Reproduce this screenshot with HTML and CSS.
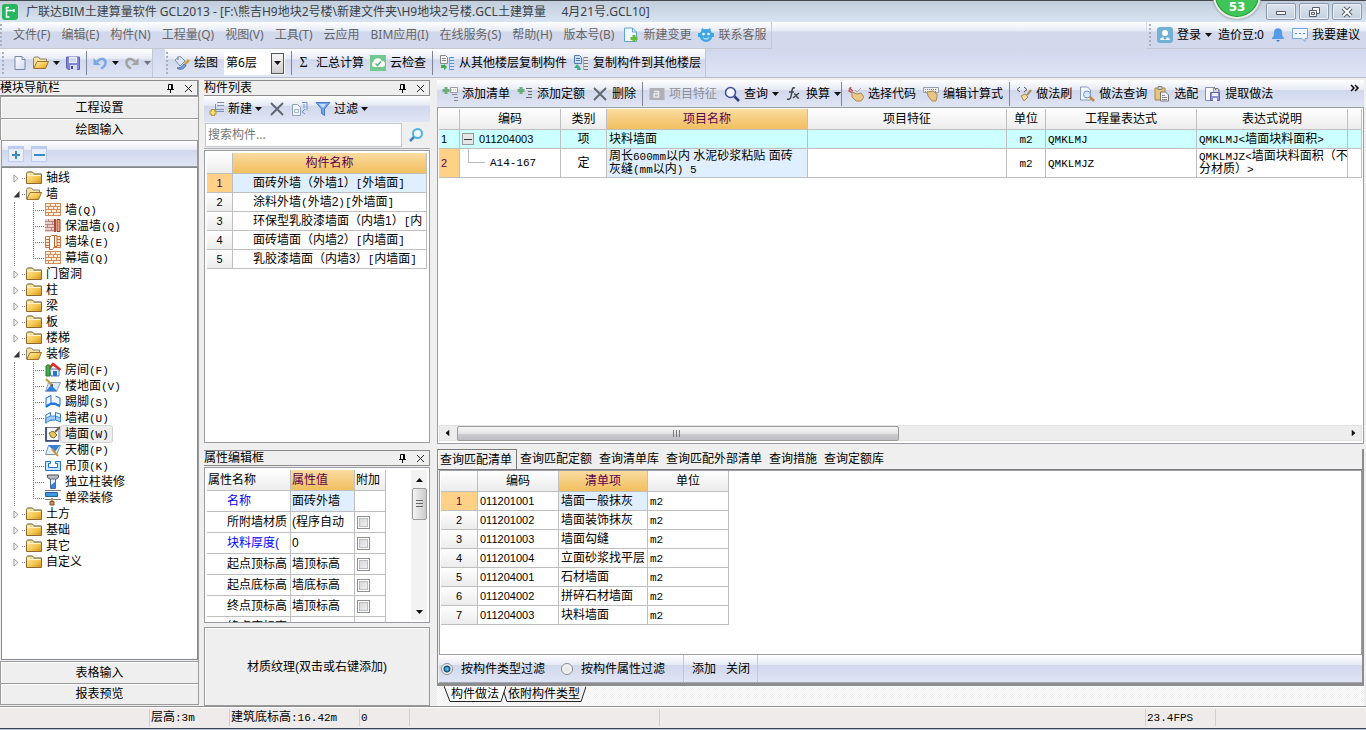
FILE: index.html
```html
<!DOCTYPE html>
<html lang="zh-CN">
<head>
<meta charset="utf-8">
<title>广联达BIM土建算量软件 GCL2013</title>
<link rel="stylesheet" href="styles.css">
</head>
<body>
<svg class="defs" aria-hidden="true">
  <defs>
    <linearGradient id="gold" x1="0" y1="0" x2="1" y2="1"><stop offset="0" stop-color="#fff2a8"/><stop offset=".6" stop-color="#f3c550"/><stop offset="1" stop-color="#d58f1c"/></linearGradient>
    <linearGradient id="page" x1="0" y1="0" x2="1" y2="1"><stop offset="0" stop-color="#fff"/><stop offset="1" stop-color="#cfdbee"/></linearGradient>
    <symbol id="folder" viewBox="0 0 16 16"><path d="M.5 13.500V3.500l1-1.500h5l1.500 2h7.500v9.500z" fill="url(#gold)" stroke="#8d6b30"/><path d="M1.500 5.500h13" stroke="#fff7cf"/><path d="M.5 3.500l1-1.500h5l1.500 2h7.500" fill="none" stroke="#9a958a"/></symbol>
    <symbol id="folder-open" viewBox="0 0 16 16"><path d="M.5 13V3.500l1-1.500h4l1.500 2h6.500V7" fill="#f7e3a0" stroke="#8b8271"/><path d="M.8 13.500L4 6.500h11.500L12.500 13.500z" fill="url(#gold)" stroke="#9b7331"/></symbol>
    <symbol id="brick" viewBox="0 0 16 16"><path d="M1 2h14v12H1z" fill="#fff1df"/><path d="M.5 1.500h15M.5 4.500h15M.5 7.500h15M.5 10.500h15M.5 13.500h15M.5 1v13M15.500 1v13M5.500 1.500v3M10.500 1.500v3M3.500 4.500v3M8.500 4.500v3M12.500 4.500v3M6.500 7.500v3M11.500 7.500v3M3.500 10.500v3M8.500 10.500v3" stroke="#d68a58" fill="none"/></symbol>
    <symbol id="brick-warm" viewBox="0 0 16 16"><path d="M0 1h10v13H0z" fill="#e9cfc9"/><path d="M0 3.500h10M0 6.500h10M0 9.500h10M0 12.500h10M3.500 1v2.500M7.500 3.500v3M2.500 6.500v3M6.500 9.500v3" stroke="#bd8582"/><path d="M9 1h2v13H9z" fill="#a94b36"/><path d="M12 1.500h3v12h-3z" fill="#f2a06e" stroke="#9a3f28"/></symbol>
    <symbol id="brick-pier" viewBox="0 0 16 16"><path d="M.5 2.500h15v11H.5z" fill="#ffe9d2" stroke="#c97845"/><path d="M0 5.500h5M0 8.500h5M0 11.500h5M12 5.500h4M12 8.500h4M12 11.500h4" stroke="#c97845"/><path d="M4.500 3.500l2-2h3v11l-2 3h-3zM9.500 1.500h2.500v11H9.500" fill="#fff" stroke="#bd6233"/></symbol>
    <symbol id="house" viewBox="0 0 16 16"><path d="M4 7h10v7H6z" fill="#e8f1ff" stroke="#4a7cc0"/><path d="M3 8l5-6 7.500 6" fill="none" stroke="#d92c2c" stroke-width="2.500"/><path d="M8 14V9h4v5z" fill="#2f74cf"/><path d="M1 4c2-2 4-1 4 0v10H1z" fill="#46ab48" stroke="#1d7a31"/></symbol>
    <symbol id="floor" viewBox="0 0 16 16"><path d="M3.500 4.500h12l-4 9H.5z" fill="#d9e8fb" stroke="#8ca2bd"/><path d="M1 13l5-6 6 6z" fill="#2c7fdf"/><path d="M1 1l6 6" stroke="#c3993c" stroke-width="2"/><path d="M5 7l3-1v3z" fill="#555"/></symbol>
    <symbol id="skirt" viewBox="0 0 16 16"><path d="M1 13V4l5-2.500v8.500l4-.500 5 2V4l-4.500-2" fill="#eef6ff" stroke="#1f6fd0"/><path d="M1 11l5-2.500 4 0 5 2.500v2.500L10 11H6l-5 3z" fill="#1e78dc"/></symbol>
    <symbol id="dado" viewBox="0 0 16 16"><path d="M.8 13.500V5L5.500 2.500v8l5-1 5 2.500V4L10.500 2.500" fill="#eaf4ff" stroke="#3778b8"/><path d="M1 8l4.500-2 5 0 5 2v4l-5-2h-5L1 13z" fill="#9ed0fa" stroke="#3f8edc"/><path d="M10.500 2.500v7.500" stroke="#3778b8"/></symbol>
    <symbol id="wallface" viewBox="0 0 16 16"><path d="M1 1.500h13v13H1z" fill="#f2f6fd" stroke="#6d7891"/><path d="M1 1v14h13" fill="none" stroke="#273a73" stroke-width="1.500"/><path d="M4 7l4-2 4 4-3 3-3-1z" fill="#e3c75d" stroke="#8d722a"/><path d="M10 6l5-5" stroke="#6a6050" stroke-width="2"/></symbol>
    <symbol id="ceiling" viewBox="0 0 16 16"><path d="M3.500 3.500h12l-4 9H.5z" fill="#e2edf9" stroke="#7d93b2"/><path d="M3 3h12l-5 7z" fill="#347fd8"/><path d="M7 7l6 7" stroke="#c59a3d" stroke-width="2"/></symbol>
    <symbol id="hang" viewBox="0 0 16 16"><path d="M.5 3.500h5v2h-2v4h9v-4h-2v-2h5v9H.5z" fill="#cce7ff" stroke="#1d72d2"/></symbol>
    <symbol id="column" viewBox="0 0 16 16"><path d="M2.500 1h11v2.500l-3 2h-5l-3-2z" fill="#b7bcc4" stroke="#4d5158"/><path d="M5.500 5h5v9.500h-5z" fill="#e6f1ff" stroke="#566b8c"/><path d="M6 14v-3l4-3v6z" fill="#347edc"/></symbol>
    <symbol id="beam" viewBox="0 0 16 16"><path d="M0 .500h16M0 9.500h16" stroke="#777"/><path d="M.5 2.500h12v4H.5z" fill="#3d96e2" stroke="#1f61a4"/><path d="M7 8v3" stroke="#c88d55" stroke-width="2"/><path d="M5 11.500h4V15H5z" fill="#d19a5c" stroke="#75502d"/></symbol>
    <symbol id="new" viewBox="0 0 16 16"><path d="M3 1.500h7l3 3v10H3z" fill="url(#page)" stroke="#7688a8"/><path d="M10 1.500v3h3" fill="#e8f0fa" stroke="#7688a8"/></symbol>
    <symbol id="save" viewBox="0 0 16 16"><path d="M1.500 2h13v12.500H3L1.500 13z" fill="#7f84d6" stroke="#6064b4"/><path d="M4 2h8v6H4z" fill="#eef1fb"/><path d="M5 4h6M5 6h6" stroke="#b4bae0"/><path d="M5 10h7v5H5z" fill="#d8dcf2"/><path d="M6 11h2v3H6z" fill="#45498e"/></symbol>
    <symbol id="undo" viewBox="0 0 16 16"><path d="M5 6.500C9 2 14 4 13.500 8c-.2 3-2.500 4.500-4.500 5.500" fill="none" stroke="#7ba8e4" stroke-width="2.500"/><path d="M1.500 3v7h7z" fill="#7ba8e4"/></symbol>
    <symbol id="brush" viewBox="0 0 16 16"><path d="M1 5l5-4 5 5-5 5z" fill="#dde6f4" stroke="#7d8fae"/><path d="M4 5V1.500" stroke="#677b9e"/><path d="M3 13c4 3 8 0 9-3l-2-1c-2 3-4 4-7 4z" fill="#7ba6e6" stroke="#4a6fb4"/><path d="M11 9l4-4" stroke="#d0a13a" stroke-width="2.500"/></symbol>
    <symbol id="cloud" viewBox="0 0 16 16"><path d="M0 0h16v16H0z" fill="#72c98f"/><path d="M4 12a3 3 0 0 1-.5-5.500A4.500 4.500 0 0 1 12 6a3 3 0 0 1 0 6z" fill="#fff"/><path d="M5.500 8.500l2 2 3.500-4" fill="none" stroke="#55b578" stroke-width="1.500"/></symbol>
    <symbol id="copy-from" viewBox="0 0 16 16"><path d="M1.500.500h5l2 2v6h-7z" fill="#f2f2f2" stroke="#888"/><path d="M3 3.500h4M3 5.500h4" stroke="#888"/><path d="M10 2v13h5V2z" fill="#d6e6fa"/><path d="M10 2.500h5M10 5.500h5M10 8.500h5M10 11.500h5M10 14.500h5" stroke="#4d8bd4"/><path d="M10.500 2v13" stroke="#7fa8dc"/><path d="M2 10v3h3v2.500L8 12 5 9v1" fill="#3caf4a"/></symbol>
    <symbol id="copy-to" viewBox="0 0 16 16"><path d="M1.500.500h5l2 2v6h-7z" fill="#cfe0fb" stroke="#4f76b5"/><path d="M3 3.500h4M3 5.500h4" stroke="#4f76b5"/><path d="M10 2v13h5V2z" fill="#e8e8e8"/><path d="M10 2.500h5M10 5.500h5M10 8.500h5M10 11.500h5M10 14.500h5" stroke="#777"/><path d="M10.500 2v13" stroke="#aaa"/><path d="M8 15H4v-2H1l3-4 3 3" fill="#3caf8a"/></symbol>
    <symbol id="newchange" viewBox="0 0 16 16"><path d="M1.500 1h8l4 4v9.500h-12z" fill="#f2f9ff" stroke="#5fa4d8"/><path d="M9.500 1v4h4" fill="none" stroke="#5fa4d8"/><path d="M11 8v7M7.500 11.500h7" stroke="#67b936" stroke-width="3"/></symbol>
    <symbol id="service" viewBox="0 0 16 16"><circle cx="8" cy="8.500" r="6.500" fill="#3ea6e6"/><path d="M0 6h2v4H0zM14 6h2v4h-2z" fill="#3ea6e6"/><path d="M3 4L4 1l3 2M13 4l-1-3-3 2" fill="#3ea6e6"/><circle cx="5.500" cy="7" r="1.300" fill="#fff"/><circle cx="10.500" cy="7" r="1.300" fill="#fff"/><path d="M5 10.500c2 2 4 2 6 0" stroke="#fff" fill="none"/></symbol>
    <symbol id="user" viewBox="0 0 16 16"><rect width="16" height="16" rx="3" fill="#73b0d5"/><circle cx="8" cy="6" r="3" fill="#fff"/><path d="M3 13c0-4 10-4 10 0z" fill="#fff"/><path d="M8 9l2 2-2 2-2-2z" fill="#73b0d5"/></symbol>
    <symbol id="bell" viewBox="0 0 16 16"><path d="M2 11c2-2 2-3 2-6 0-5 8-5 8 0 0 3 0 4 2 6v1H2z" fill="#559be9"/><path d="M6 13h4l-2 2z" fill="#3b7fd0"/></symbol>
    <symbol id="chat" viewBox="0 0 16 16"><path d="M.5 1.500h15v10H13v3l-3-3H.5z" fill="#f0f6ff" stroke="#74a6e4"/><path d="M3 6.500h2M7 6.500h2M11 6.500h2" stroke="#5b85bf"/></symbol>
    <symbol id="add-list" viewBox="0 0 16 16"><path d="M4 1v7M.5 4.500h7" stroke="#6aae78" stroke-width="3"/><path d="M8.500 1.500h7v5h-7z" fill="#fff" stroke="#99a"/><path d="M9 4h6" stroke="#9aa" stroke-dasharray="1 1"/><path d="M10 8.500h5M12 11.500h4M12 14.500h4" stroke="#888"/></symbol>
    <symbol id="add-quota" viewBox="0 0 16 16"><path d="M4 1v7M.5 4.500h7" stroke="#6aae78" stroke-width="3"/><path d="M9 2.500h6M11 5.500h4M11 8.500h4M9 11.500h6" stroke="#666"/></symbol>
    <symbol id="cross" viewBox="0 0 16 16"><path d="M2 2l12 12M14 2L2 14" stroke="#60656c" stroke-width="1.800"/></symbol>
    <symbol id="feature" viewBox="0 0 16 16"><path d="M.5 2h15v12H.5z" fill="#aeb0b5"/><path d="M5 5.500h4.500V11H5V8h4" fill="none" stroke="#e6e8ec" stroke-width="1.500"/></symbol>
    <symbol id="lens" viewBox="0 0 16 16"><circle cx="6.500" cy="6.500" r="5" fill="#f2f6ff" stroke="#41499a" stroke-width="1.500"/><path d="M10.500 10.500l4.500 4.500" stroke="#34397c" stroke-width="2.500"/></symbol>
    <symbol id="lens-blue" viewBox="0 0 16 16"><circle cx="9.500" cy="6.500" r="4.500" fill="#eef8ff" stroke="#50b0e8" stroke-width="2"/><path d="M6 10l-4 4" stroke="#4384c4" stroke-width="2.500"/></symbol>
    <symbol id="fx" viewBox="0 0 16 16"><path d="M9 2C6 1 6 4 5.500 8S4 14 1 13M3 6h5M8 8c3-1 2 5 5 4M13 7l-6 5" fill="none" stroke="#444" stroke-width="1.500"/></symbol>
    <symbol id="hand" viewBox="0 0 16 16"><path d="M1 2l4 3M3 1L1 5l4 2" stroke="#c65454" stroke-width="1.500" fill="none"/><path d="M4 6l5 2 4-1 3 4-3 4H8l-4-4z" fill="#e9c98a" stroke="#b08a4d"/><path d="M7 4l2 2 4-4" stroke="#aaa" fill="none"/></symbol>
    <symbol id="formula" viewBox="0 0 16 16"><path d="M.5 1.500h15v5H.5z" fill="#eee" stroke="#9b9fa9"/><path d="M2 3.500h12M2 5.500h12" stroke="#888" stroke-dasharray="1 1"/><path d="M4 6l6-1 4 3v3l-1 4H9L5 10z" fill="#e5c58a" stroke="#b08a4d"/></symbol>
    <symbol id="method" viewBox="0 0 16 16"><path d="M4 1L1 3.500 4 6M8 1l3 2.500L8 6" fill="none" stroke="#555"/><path d="M5 10l4-2 3 3-4 4z" fill="#efd99a" stroke="#ac8c4b"/><path d="M11 9l4-5" stroke="#a68340" stroke-width="2"/></symbol>
    <symbol id="method-find" viewBox="0 0 16 16"><path d="M1.500 1h7l3 3v10h-10z" fill="#f7faff" stroke="#8599bb"/><circle cx="8" cy="8.500" r="3.500" fill="#d6ebff" stroke="#6c93c8"/><path d="M11 11l4 4" stroke="#c98a35" stroke-width="2.500"/></symbol>
    <symbol id="paste" viewBox="0 0 16 16"><path d="M1 2h10v12H1z" fill="#e7c67a" stroke="#a88747"/><path d="M4 .500h4v3H4z" fill="#ccc" stroke="#888"/><path d="M6.500 6h5l3 3v6h-8z" fill="#f4f4f4" stroke="#777"/><path d="M8 9.500h3M8 11.500h5M8 13.500h5" stroke="#888"/></symbol>
    <symbol id="extract" viewBox="0 0 16 16"><path d="M.5 1.500h8v13h-8z" fill="#f6f8fc" stroke="#8591aa"/><path d="M5.500 6.500h9v8h-9z" fill="#8a92d6" stroke="#5e65ac"/><path d="M7 7h6v3H7zM8 12h4v3H8z" fill="#eef"/><path d="M9 1l2 3M14 6c0-4-1-4-4-3" fill="none" stroke="#555"/></symbol>
    <symbol id="new-item" viewBox="0 0 16 16"><path d="M8 1.500h7M8 4.500h7M6.500 3v9M7 10.500h8M7 8.500h8" stroke="#7890b5" fill="none"/><path d="M4 8v7M.5 11.500h7" stroke="#b39a3e" stroke-width="4"/><path d="M4 9v5M1.500 11.500h5" stroke="#f9e377" stroke-width="2"/></symbol>
    <symbol id="copy-item" viewBox="0 0 16 16"><path d="M.5 3.500h5l3 3v8h-8z" fill="#f2f5fb" stroke="#8da0c2"/><path d="M2.500 8.500h4v3h-4z" fill="none" stroke="#a6b5d0"/><path d="M10 1.500h5v8M13 8l-3 3 3 2M12 3v4" fill="none" stroke="#6f92cc"/></symbol>
    <symbol id="funnel" viewBox="0 0 16 16"><path d="M1 1.500h14L9.500 8v6.500l-3-2V8z" fill="#73a6ee" stroke="#4a7acb"/><path d="M4 3h7L8 7" fill="#c5dfff"/></symbol>
    <symbol id="plus" viewBox="0 0 16 16"><path d="M.5.500h15v15H.5z" fill="#e9eefa" stroke="#bccdf0"/><path d="M0 1.500h16" stroke="#bccdf0" stroke-width="3"/><path d="M8 5v8M4 9h8" stroke="#3c8bc8" stroke-width="2"/></symbol>
    <symbol id="minus" viewBox="0 0 16 16"><path d="M.5.500h15v15H.5z" fill="#e9eefa" stroke="#bccdf0"/><path d="M0 1.500h16" stroke="#bccdf0" stroke-width="3"/><path d="M3 9h11" stroke="#3c8bc8" stroke-width="2"/></symbol>
    <symbol id="pin" viewBox="0 0 9 9"><path d="M2.500 5V.500h4V5M1 5.500h7M4.500 6v3M5.500 1v4" fill="none" stroke="#000"/></symbol>
    <symbol id="close" viewBox="0 0 9 9"><path d="M1 1l7 7M8 1L1 8" stroke="#222"/></symbol>
    <symbol id="caret" viewBox="0 0 7 4"><path d="M0 0h7L3.500 4z" fill="#111"/></symbol>
    <symbol id="closed" viewBox="0 0 7 9"><path d="M1 1v7l4-3.500z" fill="#fff" stroke="#999"/></symbol>
    <symbol id="opened" viewBox="0 0 7 9"><path d="M6.500 1v6.500H.5z" fill="#333"/></symbol>
  </defs>
</svg>
<div class="app">
  <header class="titlebar">
    <svg class="logo" viewBox="0 0 16 16"><rect width="16" height="16" rx="3" fill="#25b65e"/><path d="M4.500 3v10h3M4.500 6.500H12M12 5v3M4.500 3.500H7" fill="none" stroke="#fff" stroke-width="1.500"/></svg>
    <h1>广联达BIM土建算量软件 GCL2013 - [F:\熊吉H9地块2号楼\新建文件夹\H9地块2号楼.GCL土建算量&nbsp;&nbsp;&nbsp; &nbsp;4月21号.GCL10]</h1>
    <div class="badge">53</div>
    <div class="winbtns">
      <button type="button" aria-label="最小化"><svg viewBox="0 0 12 12"><path d="M1.500 5.500h9v3h-9z" fill="#fff" stroke="#555c69"/></svg></button>
      <button type="button" aria-label="还原"><svg viewBox="0 0 12 12"><path d="M4.500 1.500h7v6h-7z" fill="#fff" stroke="#555c69"/><path d="M1.500 4.500h7v6h-7z" fill="#fff" stroke="#555c69"/><path d="M3.500 6.500h3v2h-3z" fill="none" stroke="#555c69"/></svg></button>
      <button type="button" aria-label="关闭"><svg viewBox="0 0 12 12"><path d="M2 2l8 8M10 2l-8 8" stroke="#555c69" stroke-width="4"/><path d="M2 2l8 8M10 2l-8 8" stroke="#fff" stroke-width="2"/></svg></button>
    </div>
  </header>

  <div class="bars">
    <div class="menurow">
      <nav class="menu">
        <span class="grip"></span>
        <button type="button">文件(F)</button><button type="button">编辑(E)</button><button type="button">构件(N)</button><button type="button">工程量(Q)</button><button type="button">视图(V)</button><button type="button">工具(T)</button><button type="button">云应用</button><button type="button">BIM应用(I)</button><button type="button">在线服务(S)</button><button type="button">帮助(H)</button><button type="button">版本号(B)</button>
        <div class="menulinks">
          <button type="button"><svg class="i"><use href="#newchange"/></svg>新建变更</button>
          <button type="button"><svg class="i"><use href="#service"/></svg>联系客服</button>
        </div>
      </nav>
      <div class="account">
        <span class="grip"></span>
        <button type="button"><svg class="i"><use href="#user"/></svg>登录<svg class="caret"><use href="#caret"/></svg></button>
        <span>造价豆:0</span>
        <button type="button" aria-label="通知"><svg class="i"><use href="#bell"/></svg></button>
        <button type="button"><svg class="i"><use href="#chat"/></svg>我要建议</button>
      </div>
    </div>
    <div class="toolrow">
      <div class="strip files">
        <span class="grip"></span>
        <button type="button" aria-label="新建"><svg class="i"><use href="#new"/></svg></button>
        <button type="button" aria-label="打开"><svg class="i"><use href="#folder-open"/></svg><svg class="caret"><use href="#caret"/></svg></button>
        <button type="button" aria-label="保存"><svg class="i"><use href="#save"/></svg></button>
        <span class="sep"></span>
        <button type="button" aria-label="撤销"><svg class="i"><use href="#undo"/></svg><svg class="caret"><use href="#caret"/></svg></button>
        <button type="button" aria-label="重做" disabled><svg class="i redo"><use href="#undo"/></svg><svg class="caret"><use href="#caret"/></svg></button>
      </div>
      <div class="strip draw">
        <span class="grip"></span>
        <button type="button"><svg class="i"><use href="#brush"/></svg>绘图</button>
        <div class="combo"><select aria-label="楼层"><option>第6层</option></select><span class="drop"><svg class="caret"><use href="#caret"/></svg></span></div>
        <span class="sep"></span>
        <button type="button" class="sum"><span class="sigma">Σ</span>汇总计算</button>
        <button type="button"><svg class="i"><use href="#cloud"/></svg>云检查</button>
        <span class="sep"></span>
        <button type="button"><svg class="i"><use href="#copy-from"/></svg>从其他楼层复制构件</button>
        <button type="button"><svg class="i"><use href="#copy-to"/></svg>复制构件到其他楼层</button>
      </div>
    </div>
  </div>

  <main class="work">
    <aside class="nav">
      <div class="cap"><h2>模块导航栏</h2><svg class="g"><use href="#pin"/></svg><svg class="g"><use href="#close"/></svg></div>
      <button type="button" class="section">工程设置</button>
      <button type="button" class="section">绘图输入</button>
      <div class="treebar">
        <button type="button" aria-label="展开"><svg class="i"><use href="#plus"/></svg></button>
        <button type="button" aria-label="折叠"><svg class="i"><use href="#minus"/></svg></button>
      </div>
      <ul class="tree">
        <li><div class="node"><svg class="tw"><use href="#closed"/></svg><i></i><svg class="i"><use href="#folder"/></svg>轴线</div></li>
        <li><div class="node"><svg class="tw"><use href="#opened"/></svg><i></i><svg class="i"><use href="#folder-open"/></svg>墙</div>
          <ul>
            <li><i></i><svg class="i"><use href="#brick"/></svg><span>墙<b>(Q)</b></span></li>
            <li><i></i><svg class="i"><use href="#brick-warm"/></svg><span>保温墙<b>(Q)</b></span></li>
            <li><i></i><svg class="i"><use href="#brick-pier"/></svg><span>墙垛<b>(E)</b></span></li>
            <li><i></i><svg class="i"><use href="#brick"/></svg><span>幕墙<b>(Q)</b></span></li>
          </ul></li>
        <li><div class="node"><svg class="tw"><use href="#closed"/></svg><i></i><svg class="i"><use href="#folder"/></svg>门窗洞</div></li>
        <li><div class="node"><svg class="tw"><use href="#closed"/></svg><i></i><svg class="i"><use href="#folder"/></svg>柱</div></li>
        <li><div class="node"><svg class="tw"><use href="#closed"/></svg><i></i><svg class="i"><use href="#folder"/></svg>梁</div></li>
        <li><div class="node"><svg class="tw"><use href="#closed"/></svg><i></i><svg class="i"><use href="#folder"/></svg>板</div></li>
        <li><div class="node"><svg class="tw"><use href="#closed"/></svg><i></i><svg class="i"><use href="#folder"/></svg>楼梯</div></li>
        <li><div class="node"><svg class="tw"><use href="#opened"/></svg><i></i><svg class="i"><use href="#folder-open"/></svg>装修</div>
          <ul>
            <li><i></i><svg class="i"><use href="#house"/></svg><span>房间<b>(F)</b></span></li>
            <li><i></i><svg class="i"><use href="#floor"/></svg><span>楼地面<b>(V)</b></span></li>
            <li><i></i><svg class="i"><use href="#skirt"/></svg><span>踢脚<b>(S)</b></span></li>
            <li><i></i><svg class="i"><use href="#dado"/></svg><span>墙裙<b>(U)</b></span></li>
            <li><i></i><svg class="i"><use href="#wallface"/></svg><span class="current">墙面<b>(W)</b></span></li>
            <li><i></i><svg class="i"><use href="#ceiling"/></svg><span>天棚<b>(P)</b></span></li>
            <li><i></i><svg class="i"><use href="#hang"/></svg><span>吊顶<b>(K)</b></span></li>
            <li><i></i><svg class="i"><use href="#column"/></svg><span>独立柱装修</span></li>
            <li><i></i><svg class="i"><use href="#beam"/></svg><span>单梁装修</span></li>
          </ul></li>
        <li><div class="node"><svg class="tw"><use href="#closed"/></svg><i></i><svg class="i"><use href="#folder"/></svg>土方</div></li>
        <li><div class="node"><svg class="tw"><use href="#closed"/></svg><i></i><svg class="i"><use href="#folder"/></svg>基础</div></li>
        <li><div class="node"><svg class="tw"><use href="#closed"/></svg><i></i><svg class="i"><use href="#folder"/></svg>其它</div></li>
        <li><div class="node"><svg class="tw"><use href="#closed"/></svg><i></i><svg class="i"><use href="#folder"/></svg>自定义</div></li>
      </ul>
      <button type="button" class="section">表格输入</button>
      <button type="button" class="section">报表预览</button>
    </aside>

    <section class="parts">
      <div class="cap"><h2>构件列表</h2><svg class="g"><use href="#pin"/></svg><svg class="g"><use href="#close"/></svg></div>
      <div class="tools">
        <button type="button"><svg class="i"><use href="#new-item"/></svg>新建<svg class="caret"><use href="#caret"/></svg></button>
        <button type="button" aria-label="删除"><svg class="i"><use href="#cross"/></svg></button>
        <button type="button" aria-label="复制"><svg class="i"><use href="#copy-item"/></svg></button>
        <button type="button"><svg class="i"><use href="#funnel"/></svg>过滤<svg class="caret"><use href="#caret"/></svg></button>
      </div>
      <div class="search"><input type="text" aria-label="搜索构件" placeholder="搜索构件..."><button type="button" aria-label="搜索"><svg class="i"><use href="#lens-blue"/></svg></button></div>
      <div class="sheet list">
        <table class="grid">
          <colgroup><col class="w26"><col></colgroup>
          <thead><tr><th></th><th class="hot">构件名称</th></tr></thead>
          <tbody>
            <tr><th class="on">1</th><td class="sel">面砖外墙（外墙1）<b>[</b>外墙面<b>]</b></td></tr>
            <tr><th>2</th><td>涂料外墙<b>(</b>外墙2<b>)[</b>外墙面<b>]</b></td></tr>
            <tr><th>3</th><td>环保型乳胶漆墙面（内墙1）<b>[</b>内</td></tr>
            <tr><th>4</th><td>面砖墙面（内墙2）<b>[</b>内墙面<b>]</b></td></tr>
            <tr><th>5</th><td>乳胶漆墙面（内墙3）<b>[</b>内墙面<b>]</b></td></tr>
          </tbody>
        </table>
      </div>
      <div class="cap second"><h2>属性编辑框</h2><svg class="g"><use href="#pin"/></svg><svg class="g"><use href="#close"/></svg></div>
      <div class="sheet props">
        <table class="grid">
          <colgroup><col class="w84"><col class="w64"><col class="w31"></colgroup>
          <thead><tr><th>属性名称</th><th class="hot">属性值</th><th>附加</th></tr></thead>
          <tbody>
            <tr><td class="blue">名称</td><td class="sel">面砖外墙</td><td></td></tr>
            <tr><td>所附墙材质</td><td>(程序自动</td><td><input type="checkbox" aria-label="附加 所附墙材质"></td></tr>
            <tr><td class="blue">块料厚度(</td><td>0</td><td><input type="checkbox" aria-label="附加 块料厚度"></td></tr>
            <tr><td>起点顶标高</td><td>墙顶标高</td><td><input type="checkbox" aria-label="附加 起点顶标高"></td></tr>
            <tr><td>起点底标高</td><td>墙底标高</td><td><input type="checkbox" aria-label="附加 起点底标高"></td></tr>
            <tr><td>终点顶标高</td><td>墙顶标高</td><td><input type="checkbox" aria-label="附加 终点顶标高"></td></tr>
            <tr><td>终点底标高</td><td></td><td></td></tr>
          </tbody>
        </table>
        <div class="vscroll"><svg class="caret up"><use href="#caret"/></svg><span class="thumb"></span><svg class="caret end"><use href="#caret"/></svg></div>
      </div>
      <button type="button" class="texture">材质纹理(双击或右键添加)</button>
    </section>

    <section class="detail">
      <div class="tools main">
        <button type="button"><svg class="i"><use href="#add-list"/></svg>添加清单</button>
        <button type="button"><svg class="i"><use href="#add-quota"/></svg>添加定额</button>
        <button type="button"><svg class="i"><use href="#cross"/></svg>删除</button>
        <span class="sep"></span>
        <button type="button" disabled><svg class="i"><use href="#feature"/></svg>项目特征</button>
        <button type="button"><svg class="i"><use href="#lens"/></svg>查询<svg class="caret"><use href="#caret"/></svg></button>
        <button type="button"><svg class="i"><use href="#fx"/></svg>换算<svg class="caret"><use href="#caret"/></svg></button>
        <span class="sep near"></span>
        <button type="button"><svg class="i"><use href="#hand"/></svg>选择代码</button>
        <button type="button"><svg class="i"><use href="#formula"/></svg>编辑计算式</button>
        <span class="sep"></span>
        <button type="button"><svg class="i"><use href="#method"/></svg>做法刷</button>
        <button type="button"><svg class="i"><use href="#method-find"/></svg>做法查询</button>
        <button type="button"><svg class="i"><use href="#paste"/></svg>选配</button>
        <button type="button"><svg class="i"><use href="#extract"/></svg>提取做法</button>
        <button type="button" class="more" aria-label="更多"><svg viewBox="0 0 10 8"><path d="M1 1l3 3-3 3M5 1l3 3-3 3" fill="none" stroke="#000" stroke-width="1.500"/></svg></button>
      </div>
      <div class="sheet bill">
        <table class="grid">
          <colgroup><col class="w21"><col class="w101"><col class="w46"><col class="w201"><col class="w199"><col class="w39"><col class="w151"><col class="w151"><col></colgroup>
          <thead><tr><th></th><th>编码</th><th>类别</th><th class="hot">项目名称</th><th>项目特征</th><th>单位</th><th>工程量表达式</th><th>表达式说明</th><th></th></tr></thead>
          <tbody>
            <tr class="cyan"><td class="num">1</td><td><div class="code"><span class="box"></span>011204003</div></td><td class="c">项</td><td>块料墙面</td><td></td><td class="c"><b>m2</b></td><td><b>QMKLMJ</b></td><td><b>QMKLMJ&lt;</b>墙面块料面积<b>&gt;</b></td><td></td></tr>
            <tr class="tall"><td class="num on">2</td><td><div class="code"><span class="elbow"></span><b>A14-167</b></div></td><td class="c">定</td><td class="sel">周长<b>600mm</b>以内 水泥砂浆粘贴 面砖<br>灰缝<b>(mm</b>以内<b>) 5</b></td><td></td><td class="c"><b>m2</b></td><td><b>QMKLMJZ</b></td><td><b>QMKLMJZ&lt;</b>墙面块料面积（不<br>分材质）<b>&gt;</b></td><td></td></tr>
          </tbody>
        </table>
        <div class="hscroll"><svg class="caret left"><use href="#caret"/></svg><span class="thumb"></span><svg class="caret right"><use href="#caret"/></svg></div>
      </div>
      <div class="query">
        <div class="tabs" role="tablist">
          <button type="button" role="tab" class="active" aria-selected="true">查询匹配清单</button><button type="button" role="tab">查询匹配定额</button><button type="button" role="tab">查询清单库</button><button type="button" role="tab">查询匹配外部清单</button><button type="button" role="tab">查询措施</button><button type="button" role="tab">查询定额库</button>
        </div>
        <div class="results">
          <table class="grid">
            <colgroup><col class="w37"><col class="w81"><col class="w89"><col class="w81"></colgroup>
            <thead><tr><th></th><th>编码</th><th class="hot">清单项</th><th>单位</th></tr></thead>
            <tbody>
              <tr><th class="on">1</th><td class="id">011201001</td><td class="sel">墙面一般抹灰</td><td><b>m2</b></td></tr>
              <tr><th>2</th><td class="id">011201002</td><td>墙面装饰抹灰</td><td><b>m2</b></td></tr>
              <tr><th>3</th><td class="id">011201003</td><td>墙面勾缝</td><td><b>m2</b></td></tr>
              <tr><th>4</th><td class="id">011201004</td><td>立面砂浆找平层</td><td><b>m2</b></td></tr>
              <tr><th>5</th><td class="id">011204001</td><td>石材墙面</td><td><b>m2</b></td></tr>
              <tr><th>6</th><td class="id">011204002</td><td>拼碎石材墙面</td><td><b>m2</b></td></tr>
              <tr><th>7</th><td class="id">011204003</td><td>块料墙面</td><td><b>m2</b></td></tr>
            </tbody>
          </table>
        </div>
        <div class="filter">
          <div class="radios">
            <label><input type="radio" name="f" checked>按构件类型过滤</label>
            <label><input type="radio" name="f">按构件属性过滤</label>
          </div>
          <div class="acts"><button type="button">添加</button><button type="button">关闭</button></div>
        </div>
      </div>
      <div class="sheets">
        <button type="button" class="st front"><svg viewBox="0 0 62 17" preserveAspectRatio="none"><path d="M0 0l6 15.500h51L62 0" fill="#fff" stroke="#222"/></svg><span>构件做法</span></button>
        <button type="button" class="st"><svg viewBox="0 0 86 17" preserveAspectRatio="none"><path d="M0 .500l5 15h76L86 .500" fill="#f0f0f0" stroke="#222"/></svg><span>依附构件类型</span></button>
      </div>
    </section>
  </main>

  <footer class="status">
    <span class="s149"></span><span class="s80">层高<b>:3m</b></span><span class="s130">建筑底标高<b>:16.42m</b></span><span class="s50"><b>0</b></span><span class="s250"></span><span class="fill"></span><span class="s70"><b>23.4FPS</b></span><span class="s150"></span>
  </footer>
  <div class="edge"></div>
</div>
</body>
</html>
```

FILE: styles.css
```css
* { box-sizing: border-box; }
body { margin: 0; }
.defs { position: absolute; width: 0; height: 0; }

.app {
  display: flex;
  flex-direction: column;
  height: 100vh;
  overflow: hidden;
  background: #efefef;
  color: #000;
  font: 12px/16px "Liberation Sans", "Noto Sans CJK SC", sans-serif;
  white-space: nowrap;
}
button {
  display: inline-flex;
  align-items: center;
  gap: 4px;
  margin: 0;
  padding: 0;
  border: 0;
  background: none;
  color: inherit;
  font: inherit;
  white-space: nowrap;
}
svg { flex: none; }
.i { width: 16px; height: 16px; }
.caret { width: 7px; height: 4px; }
b { font: 11px/12px "Liberation Mono", monospace; }
.grip {
  flex: none;
  width: 2px;
  height: 22px;
  background: repeating-linear-gradient(#a9afbf 0 2px, transparent 2px 4px);
}
.sep { flex: none; width: 1px; height: 24px; background: #7d8498; }

/* title bar */
.titlebar {
  position: relative;
  flex: none;
  display: flex;
  align-items: center;
  height: 22px;
  padding: 0 4px 0 2px;
  border-top: 1px solid #44474d;
  background: linear-gradient(#c2cddb, #d7e4f1);
}
.logo { width: 16px; height: 16px; }
.titlebar h1 {
  flex: 1;
  margin: 0 0 0 8px;
  color: #3b4148;
  font: 12px/20px "Noto Sans", "Noto Sans CJK SC", sans-serif;
}
.badge {
  position: absolute;
  top: -30px;
  right: 105px;
  z-index: 2;
  display: flex;
  align-items: flex-end;
  justify-content: center;
  width: 48px;
  height: 48px;
  padding-bottom: 3px;
  border: 2px solid #e9eee9;
  border-radius: 50%;
  background: #3fc458;
  box-shadow: 0 0 3px #777, inset 0 0 0 1px #22963c;
  color: #fff;
  font: bold 12px/14px "DejaVu Sans", sans-serif;
}
.winbtns { display: flex; gap: 3px; }
.winbtns button {
  justify-content: center;
  width: 30px;
  height: 17px;
  border: 1px solid #8d99a8;
  border-radius: 2px;
  background: linear-gradient(#dbe4ee, #c5d1df);
  box-shadow: inset 0 0 0 1px #e8eef5;
}
.winbtns svg { width: 12px; height: 12px; }

/* menu and toolbars */
.bars {
  flex: none;
  background: linear-gradient(#fff 0, #e6eaf5 9px, #d2d8ec 10px, #d3d9ed 30px, #e0e4f5 100%);
  border-bottom: 1px solid #b7bccb;
  font-family: "Noto Sans", "Noto Sans CJK SC", sans-serif;
}
.menurow { display: flex; justify-content: space-between; height: 27px; }
.menu {
  display: flex;
  align-items: center;
  gap: 11px;
  padding: 0 5px 0 0;
  border-right: 1px solid #c5c8d0;
  border-bottom: 1px solid #c5c8d0;
  color: #666;
}
.menulinks { display: flex; gap: 7px; margin-left: -2px; }
.account {
  display: flex;
  align-items: center;
  gap: 6px;
  padding: 0 6px 0 2px;
  border-left: 1px solid #d7dbe6;
  border-bottom: 1px solid #c5c8d0;
}
.toolrow { display: flex; gap: 12px; height: 28px; }
.strip, .tools, .treebar, .filter {
  display: flex;
  align-items: center;
  background: linear-gradient(#fff 0, #e6eaf5 36%, #d1d8ec 38%, #e0e5f5 100%);
}
.strip { gap: 6px; padding-right: 4px; border-right: 1px solid #c2c7d4; }
.files { gap: 5px; padding: 0 1px 0 2px; }
.files .grip { margin-right: 3px; }
.draw { padding-left: 1px; }
.redo { transform: scaleX(-1); filter: grayscale(1); }
button:disabled { color: #8b8f98; }
button:disabled .caret { opacity: .5; }
.combo { position: relative; width: 61px; height: 23px; }
.combo select {
  width: 100%;
  height: 100%;
  padding: 0 2px;
  border: 0;
  border-radius: 0;
  appearance: none;
  background: #fff;
  color: #000;
  font: inherit;
}
.drop {
  position: absolute;
  inset: 1px 1px 1px auto;
  display: flex;
  align-items: center;
  justify-content: center;
  width: 13px;
  border: 1px solid #555;
  background: linear-gradient(#f6f6f6, #cfcfcf);
  pointer-events: none;
}
.sum { gap: 7px; }
.sigma { width: 11px; font: 14px/16px "Liberation Serif", serif; }

/* work area */
.work {
  flex: 1;
  display: grid;
  grid-template-columns: 199px 226px minmax(0, 1fr);
  min-height: 0;
  padding-top: 2px;
}
.cap {
  flex: none;
  display: flex;
  align-items: center;
  gap: 9px;
  height: 16px;
  padding-right: 4px;
  border: 1px solid #8b8b8b;
  border-left: 0;
}
.cap h2 { flex: 1; margin: 0; font: 12px/14px "Liberation Sans", "Noto Sans CJK SC", sans-serif; }
.g { width: 9px; height: 9px; }
.nav { display: flex; flex-direction: column; min-height: 0; margin-bottom: 1px; border-right: 1px solid #9b9b9b; }
.section {
  flex: none;
  justify-content: center;
  height: 22px;
  border: 1px solid #9a9a9a;
  border-width: 1px 0 0 1px;
  box-shadow: inset 1px 1px #fff;
}
.treebar { flex: none; gap: 7px; height: 27px; margin-left: 1px; padding-left: 6px; border: 1px solid #9a9a9a; }
.section:last-child { border-bottom-width: 1px; }
.tree, .tree ul { margin: 0; padding: 0; list-style: none; }
.tree {
  flex: 1;
  min-height: 0;
  margin: 0 0 1px 1px;
  padding: 2px 0 0;
  border: 1px solid #828790;
  background: #fff;
  overflow: hidden;
}
.node, .tree ul li { display: flex; align-items: center; height: 16px; }
.node { padding-left: 11px; }
.node .tw { width: 7px; height: 9px; }
.node i {
  width: 5px;
  height: 1px;
  margin: 0 0 0 1px;
  background: repeating-linear-gradient(90deg, transparent 0 1px, #777 1px 2px);
}
.node .i { margin-right: 4px; }
.tree ul { margin-left: 12px; padding-left: 18px; border-left: 1px dotted #888; }
.tree ul i {
  width: 12px;
  height: 16px;
  background:
    repeating-linear-gradient(#777 0 1px, transparent 1px 2px) left top / 1px 100% no-repeat,
    repeating-linear-gradient(90deg, #777 0 1px, transparent 1px 2px) left 8px / 100% 1px no-repeat;
}
.tree ul li:last-child i { background-size: 1px 8px, 100% 1px; }
.tree ul span { padding-left: 4px; }
.tree .current { padding-right: 3px; border-radius: 2px; background: #ededed; box-shadow: 0 0 0 1px #d5d5d5; }

/* component list and properties */
.parts { display: flex; flex-direction: column; min-height: 0; margin-left: 5px; margin-right: -5px; }
.tools { flex: none; gap: 7px; height: 27px; padding-left: 5px; font-family: "Noto Sans", "Noto Sans CJK SC", sans-serif; }
.tools .sep { margin: 0 -1px; }
.parts .tools { height: 26px; }
.parts .tools button { gap: 3px; }
.search { display: flex; flex: none; gap: 4px; height: 27px; padding: 1px 4px 1px 1px; border-bottom: 1px solid #aaa; }
.search input {
  flex: 1;
  min-width: 0;
  padding: 0 2px;
  border: 1px solid #c3c7d0;
  background: #fff;
  font: 12px/16px "Noto Sans", "Noto Sans CJK SC", sans-serif;
}
.search input::placeholder { color: #777; opacity: 1; }
.search button { padding: 0 2px; }
.sheet { min-height: 0; padding: 2px; border: 1px solid #9a9da5; background: #fff; overflow: hidden; }
.list { flex: 1; margin-top: 1px; }
.second { margin-top: 7px; }
.props { display: flex; justify-content: space-between; flex: none; height: 156px; margin-top: 1px; }
.texture {
  flex: none;
  justify-content: center;
  height: 79px;
  margin-top: 4px;
  border: 1px solid #9a9a9a;
  box-shadow: inset 1px 1px #fff;
}

/* grids */
.grid { width: 100%; table-layout: fixed; border-collapse: separate; border-spacing: 0; }
.grid th, .grid td {
  height: 19px;
  padding: 0 2px;
  border-right: 1px solid #bfbfbf;
  border-bottom: 1px solid #bfbfbf;
  font-weight: 400;
  line-height: 12px;
  text-align: left;
  overflow: hidden;
}
.grid th { background: linear-gradient(#fefefe, #ececec); text-align: center; }
.grid thead th { height: 21px; line-height: 16px; }
.grid thead th.hot { background: linear-gradient(#fadba0, #f1bf5e); color: #5a0050; }
.grid .on { background: #ffd186; color: #5a0050; }
.grid .sel { background: #dfefff; }
.grid .c { text-align: center; }
.grid .blue { color: #00f; }
.grid tbody th, .grid .num, .grid .id, .code { font-size: 11px; }
.list td { padding-left: 20px; }
.w21 { width: 21px; } .w26 { width: 26px; } .w31 { width: 31px; } .w37 { width: 37px; }
.w39 { width: 39px; } .w46 { width: 46px; } .w64 { width: 64px; } .w81 { width: 81px; }
.w84 { width: 84px; } .w89 { width: 89px; } .w101 { width: 101px; } .w151 { width: 151px; }
.w199 { width: 199px; } .w201 { width: 201px; }
.props .grid { width: 179px; }
.props .grid tbody td { height: 21px; }
.props .grid th, .props .grid td { padding-left: 1px; padding-right: 0; text-align: left; }
.props .grid tbody td:first-child { padding-left: 20px; }
input[type="checkbox"] {
  display: block;
  width: 13px;
  height: 13px;
  margin: 0 1px;
  border: 1px solid #8e8f8f;
  appearance: none;
  background: linear-gradient(135deg, #cdd1d8, #f6f6f6);
  box-shadow: inset 0 0 0 1px #fff, inset 0 0 0 2px #b8bdc6;
}

/* scrollbars */
.vscroll {
  display: flex;
  flex-direction: column;
  align-items: center;
  justify-content: space-between;
  width: 16px;
  padding: 8px 0 6px;
  background: #f2f2f2;
}
.thumb { border: 1px solid #9b9b9b; border-radius: 2px; }
.vscroll .thumb {
  width: 15px;
  height: 32px;
  margin: 6px 0 auto;
  background:
    repeating-linear-gradient(#666 0 1px, transparent 1px 3px) center / 7px 9px no-repeat,
    linear-gradient(90deg, #f5f5f5, #c9cacc);
}
.up { transform: rotate(180deg); }
.hscroll { display: flex; align-items: center; height: 16px; padding: 0 4px; border: 1px solid #e2e2e2; background: #ededed; }
.hscroll .thumb {
  width: 48.4%;
  height: 15px;
  margin-left: 6px;
  background:
    repeating-linear-gradient(90deg, #777 0 1px, transparent 1px 3px) center / 9px 7px no-repeat,
    linear-gradient(#f6f6f6, #e4e4e6 50%, #cfcfd2 51%, #bcbdc1);
}
.left { transform: rotate(90deg); }
.right { margin-left: auto; transform: rotate(-90deg); }

/* bill of quantities */
.detail {
  display: grid;
  grid-template-rows: 27px 337px minmax(0, 1fr) 20px;
  min-height: 0;
  margin-left: 12px;
  padding-right: 2px;
}
.main .sep.near { margin-left: -7px; }
.main .more { align-self: flex-start; margin: 4px 0 0 auto; padding-right: 4px; }
.more svg { width: 10px; height: 8px; }
.bill { display: flex; flex-direction: column; justify-content: space-between; padding: 1px 1px 2px; }
.cyan { background: #ccffff; }
.bill .tall td { height: 29px; }
.code { display: flex; align-items: center; gap: 5px; }
.box {
  width: 12px;
  height: 12px;
  border: 1px solid #999;
  background: linear-gradient(#333, #333) center / 8px 1px no-repeat, #e6e6e6;
}
.elbow { align-self: flex-start; width: 17px; height: 14px; margin: -14px 0 0 6px; border: 1px solid #bbb; border-width: 0 0 1px 1px; }
.bill .tall .code { height: 14px; gap: 5px; }
.bill .tall .elbow { height: 21px; }

/* query panel */
.query {
  display: flex;
  flex-direction: column;
  min-height: 0;
  margin-top: 5px;
  border: 1px solid #8d8d8d;
  border-width: 0 2px 3px 1px;
}
.tabs { display: flex; flex: none; align-items: center; gap: 7px; height: 21px; border-bottom: 1px solid #7c7c7c; }
.tabs .active { height: 20px; margin-right: -4px; padding: 0 4px 0 2px; border: 1px solid #777; border-width: 1px 1px 0 0; box-shadow: inset 1px 1px #fff; }
.results { flex: 1; min-height: 0; margin-left: 1px; padding: 0 1px; border: 1px solid #9a9da5; background: #fff; overflow: hidden; }
.results .grid { width: 288px; }
.filter { flex: none; height: 28px; margin-left: 1px; border-bottom: 1px solid #9fa5b5; }
.radios, .acts { display: flex; align-items: center; height: 100%; border-right: 1px solid #c5c8d0; }
.radios { gap: 16px; padding: 0 18px 0 2px; }
.radios label { display: flex; align-items: center; gap: 8px; }
.acts { gap: 10px; padding: 0 7px 0 8px; }
input[type="radio"] {
  width: 12px;
  height: 12px;
  margin: 0;
  border: 1px solid #8b8e94;
  border-radius: 50%;
  appearance: none;
  background: radial-gradient(#e4e4e4, #fafafa);
}
input[type="radio"]:checked { background: radial-gradient(circle, #4ec2ee 0 1px, #123f66 3px, #f4f4f4 4px); }
.sheets {
  display: flex;
  padding-left: 7px;
  background: repeating-conic-gradient(#f0f0f0 0 25%, #fff 0 50%) 0 0 / 2px 2px;
}
.st { position: relative; align-self: flex-start; justify-content: center; width: 62px; height: 17px; }
.st + .st { width: 84px; margin-left: -4px; }
.front { z-index: 1; }
.st svg { position: absolute; inset: 0; width: 100%; height: 100%; }
.st span { position: relative; line-height: 15px; }

/* status bar */
.status {
  flex: none;
  display: flex;
  height: 22px;
  padding: 2px 0;
  border-top: 1px solid #8f8f8f;
  background: #efebea;
  box-shadow: inset 0 1px #fff;
}
.status span { flex: none; padding-left: 1px; border-right: 1px solid #d3cfce; line-height: 16px; }
.status .fill { flex: 1; }
.s149 { width: 150px; } .s80 { width: 80px; } .s130 { width: 130px; } .s50 { width: 50px; }
.s250 { width: 250px; } .s70 { width: 70px; } .status .s150 { width: 150px; border: 0; }
.edge { flex: none; height: 2px; border-top: 1px solid #3a4150; background: #b9c6d8; }
```
